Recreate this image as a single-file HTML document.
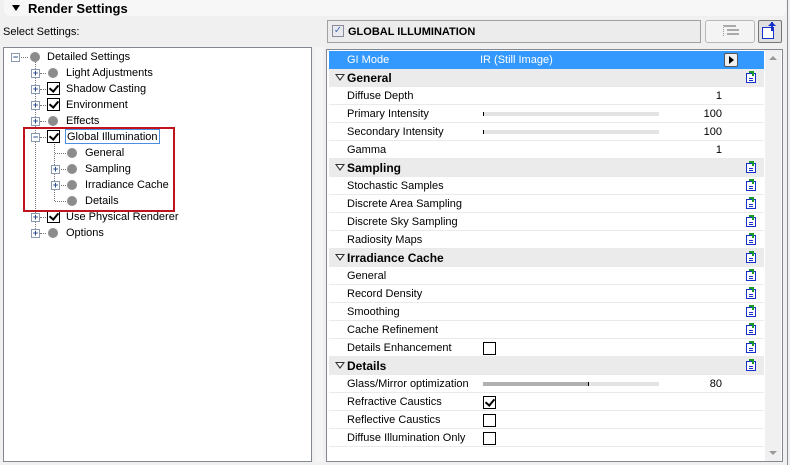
<!DOCTYPE html>
<html><head><style>
body{margin:0;width:790px;height:465px;background:#f0f0f0;position:relative;overflow:hidden;font-family:"Liberation Sans",sans-serif;font-size:11px;color:#000}
.a{position:absolute}
.tr{position:absolute;white-space:nowrap;font-size:11px}
.exp{position:absolute;width:7px;height:7px;border:1px solid #8a9bb0;background:#fff;font-size:9px;line-height:7px;text-align:center;color:#2b4b8c;font-weight:bold}
.dot{position:absolute;width:10px;height:10px;border-radius:50%;background:#8c8c8c}
.cb{position:absolute;width:11px;height:11px;border:1px solid #000;background:#fff}
.cb.c::after{content:"";position:absolute;left:3px;top:0px;width:4px;height:7px;border-right:2px solid #000;border-bottom:2px solid #000;transform:rotate(40deg)}
.dh{position:absolute;border-top:1px dotted #777;height:0}
.dv{position:absolute;border-left:1px dotted #777;width:0}
.row{position:absolute;left:329px;width:435px;height:17px;border-bottom:1px solid #eaeaea;background:#fff;font-size:11px;line-height:19px}
.row .l{position:absolute;left:18px}
.row .n{position:absolute;right:42px}
.sec{background:#ebebeb;font-weight:bold;font-size:12px;line-height:18px}
.tri{position:absolute;left:6px;top:5px;width:0;height:0;border-left:5px solid transparent;border-right:5px solid transparent;border-top:7px solid #333}
.tri::after{content:"";position:absolute;left:-3px;top:-6px;border-left:3px solid transparent;border-right:3px solid transparent;border-top:4px solid #fff}
.ic{position:absolute;left:417px;top:4px;width:8px;height:8px;border:1px solid #1530c8;background:#fff}
.ic::before{content:"";position:absolute;left:2px;top:-3px;width:3px;height:3px;border-right:2px solid #1a9a2a;border-top:2px solid #1a9a2a}
.ic::after{content:"";position:absolute;left:2px;top:4px;width:4px;height:1px;background:#1530c8;box-shadow:0 2px 0 #1530c8}
.sl{position:absolute;left:154px;top:7px;width:176px;height:4px;background:#e3e3e3}
.rc{position:absolute;left:154px;top:3px}
</style></head><body>
<div class="a" style="left:4px;top:0;width:782px;height:16px;background:#f7f7f7;border-radius:0 0 6px 6px"></div>
<div class="a" style="left:12px;top:5px;border-left:4px solid transparent;border-right:4px solid transparent;border-top:6px solid #000"></div>
<div class="a" style="left:28px;top:1px;font-weight:bold;font-size:13px">Render Settings</div>
<div class="a" style="left:3px;top:26px;font-size:11px">Select Settings:</div>
<div class="a" style="left:787px;top:0;width:1px;height:465px;background:#8a8f96"></div>

<div class="a" style="left:3px;top:47px;width:307px;height:413px;background:#fff;border:1px solid #828790"></div>
<div class="a" style="left:315px;top:47px;width:8px;height:415px;background:#f5f5f5"></div>
<div class="dv" style="left:35px;top:60px;height:175px"></div>
<div class="dv" style="left:54px;top:142px;height:59px"></div>
<div class="dh" style="left:21px;top:57px;width:7px"></div>
<div class="exp" style="left:11px;top:53px">−</div><div class="dot" style="left:30px;top:52px"></div><div class="tr" style="left:47px;top:51px">Detailed Settings</div>
<div class="dh" style="left:40px;top:73px;width:6px"></div><div class="exp" style="left:31px;top:69px">+</div><div class="dot" style="left:48px;top:68px"></div><div class="tr" style="left:66px;top:67px">Light Adjustments</div>
<div class="dh" style="left:40px;top:89px;width:6px"></div><div class="exp" style="left:31px;top:85px">+</div><div class="cb c" style="left:47px;top:82px"></div><div class="tr" style="left:66px;top:83px">Shadow Casting</div>
<div class="dh" style="left:40px;top:105px;width:6px"></div><div class="exp" style="left:31px;top:101px">+</div><div class="cb c" style="left:47px;top:98px"></div><div class="tr" style="left:66px;top:99px">Environment</div>
<div class="dh" style="left:40px;top:121px;width:6px"></div><div class="exp" style="left:31px;top:117px">+</div><div class="dot" style="left:48px;top:116px"></div><div class="tr" style="left:66px;top:115px">Effects</div>
<div class="dh" style="left:40px;top:137px;width:6px"></div><div class="exp" style="left:31px;top:133px">−</div><div class="cb c" style="left:47px;top:130px"></div><div class="tr" style="left:65px;top:129px;border:1px solid #4a90e2;padding:1px 1px 0">Global Illumination</div>
<div class="dh" style="left:55px;top:153px;width:11px"></div><div class="dot" style="left:67px;top:148px"></div><div class="tr" style="left:85px;top:147px">General</div>
<div class="dh" style="left:59px;top:169px;width:7px"></div><div class="exp" style="left:51px;top:165px">+</div><div class="dot" style="left:67px;top:164px"></div><div class="tr" style="left:85px;top:163px">Sampling</div>
<div class="dh" style="left:59px;top:185px;width:7px"></div><div class="exp" style="left:51px;top:181px">+</div><div class="dot" style="left:67px;top:180px"></div><div class="tr" style="left:85px;top:179px">Irradiance Cache</div>
<div class="dh" style="left:55px;top:201px;width:11px"></div><div class="dot" style="left:67px;top:196px"></div><div class="tr" style="left:85px;top:195px">Details</div>
<div class="dh" style="left:40px;top:217px;width:6px"></div><div class="exp" style="left:31px;top:213px">+</div><div class="cb c" style="left:47px;top:210px"></div><div class="tr" style="left:66px;top:211px">Use Physical Renderer</div>
<div class="dh" style="left:40px;top:233px;width:6px"></div><div class="exp" style="left:31px;top:229px">+</div><div class="dot" style="left:48px;top:228px"></div><div class="tr" style="left:66px;top:227px">Options</div>
<div class="a" style="left:23px;top:127px;width:148px;height:81px;border:2px solid #c0141c"></div>

<div class="a" style="left:327px;top:20px;width:372px;height:21px;border:1px solid #a0a0a0;background:#ececec"></div>
<div class="a" style="left:332px;top:25px;width:10px;height:10px;border:1px solid #8a8a9a;background:#e8eaf0;color:#4a6fb0;font-size:10px;line-height:10px;text-align:center">✓</div>
<div class="a" style="left:348px;top:26px;font-weight:bold;font-size:11px">GLOBAL ILLUMINATION</div>
<div class="a" style="left:705px;top:20px;width:48px;height:21px;border:1px solid #b8b8b8;border-radius:3px;background:#f4f4f4"></div>
<div class="a" style="left:723px;top:25px;width:3px;height:11px;border-left:1px dotted #999"></div>
<div class="a" style="left:724px;top:25px;width:12px;height:2px;background:#aaa;box-shadow:3px 4px 0 #aaa,3px 8px 0 #aaa"></div>
<div class="a" style="left:758px;top:20px;width:22px;height:21px;border:1px solid #777;border-radius:2px;background:#e0e0e0"></div>
<div class="a" style="left:762px;top:27px;width:10px;height:10px;border:1px solid #1530c8;background:#fff"></div>
<div class="a" style="left:771px;top:22px;width:2px;height:9px;background:#1530c8"></div>
<div class="a" style="left:768px;top:22px;border-left:4px solid transparent;border-right:4px solid transparent;border-bottom:4px solid #1530c8"></div>

<div class="a" style="left:326px;top:49px;width:455px;height:411px;border:1px solid #828790;background:#fff"></div>
<div class="a" style="left:765px;top:50px;width:16px;height:411px;background:#f0f0f0"></div>
<div class="a" style="left:769px;top:56px;border-left:4px solid transparent;border-right:4px solid transparent;border-bottom:4px solid #999"></div>
<div class="a" style="left:769px;top:451px;border-left:4px solid transparent;border-right:4px solid transparent;border-top:4px solid #999"></div>

<div class="row" style="top:51px;background:#3399ff;color:#fff;border-color:#3399ff"><span class="l">GI Mode</span><span style="position:absolute;left:151px">IR (Still Image)</span><div style="position:absolute;left:395px;top:2px;width:12px;height:12px;border:1px solid #555;border-radius:2px;background:#f0f0f0"><div style="position:absolute;left:4px;top:2px;border-top:4px solid transparent;border-bottom:4px solid transparent;border-left:5px solid #000"></div></div></div>
<div class="row sec" style="top:69px"><div class="tri"></div><span class="l">General</span><div class="ic"></div></div>
<div class="row" style="top:87px"><span class="l">Diffuse Depth</span><span class="n">1</span></div>
<div class="row" style="top:105px"><span class="l">Primary Intensity</span><div class="sl"><div style="width:1px;height:4px;background:#000"></div></div><span class="n">100</span></div>
<div class="row" style="top:123px"><span class="l">Secondary Intensity</span><div class="sl"><div style="width:1px;height:4px;background:#000"></div></div><span class="n">100</span></div>
<div class="row" style="top:141px"><span class="l">Gamma</span><span class="n">1</span></div>
<div class="row sec" style="top:159px"><div class="tri"></div><span class="l">Sampling</span><div class="ic"></div></div>
<div class="row" style="top:177px"><span class="l">Stochastic Samples</span><div class="ic"></div></div>
<div class="row" style="top:195px"><span class="l">Discrete Area Sampling</span><div class="ic"></div></div>
<div class="row" style="top:213px"><span class="l">Discrete Sky Sampling</span><div class="ic"></div></div>
<div class="row" style="top:231px"><span class="l">Radiosity Maps</span><div class="ic"></div></div>
<div class="row sec" style="top:249px"><div class="tri"></div><span class="l">Irradiance Cache</span><div class="ic"></div></div>
<div class="row" style="top:267px"><span class="l">General</span><div class="ic"></div></div>
<div class="row" style="top:285px"><span class="l">Record Density</span><div class="ic"></div></div>
<div class="row" style="top:303px"><span class="l">Smoothing</span><div class="ic"></div></div>
<div class="row" style="top:321px"><span class="l">Cache Refinement</span><div class="ic"></div></div>
<div class="row" style="top:339px"><span class="l">Details Enhancement</span><div class="cb rc"></div><div class="ic"></div></div>
<div class="row sec" style="top:357px"><div class="tri"></div><span class="l">Details</span><div class="ic"></div></div>
<div class="row" style="top:375px"><span class="l">Glass/Mirror optimization</span><div class="sl"><div style="width:105px;height:4px;background:#b0b0b0;border-right:1px solid #000"></div></div><span class="n">80</span></div>
<div class="row" style="top:393px"><span class="l">Refractive Caustics</span><div class="cb c rc"></div></div>
<div class="row" style="top:411px"><span class="l">Reflective Caustics</span><div class="cb rc"></div></div>
<div class="row" style="top:429px"><span class="l">Diffuse Illumination Only</span><div class="cb rc"></div></div>
</body></html>
